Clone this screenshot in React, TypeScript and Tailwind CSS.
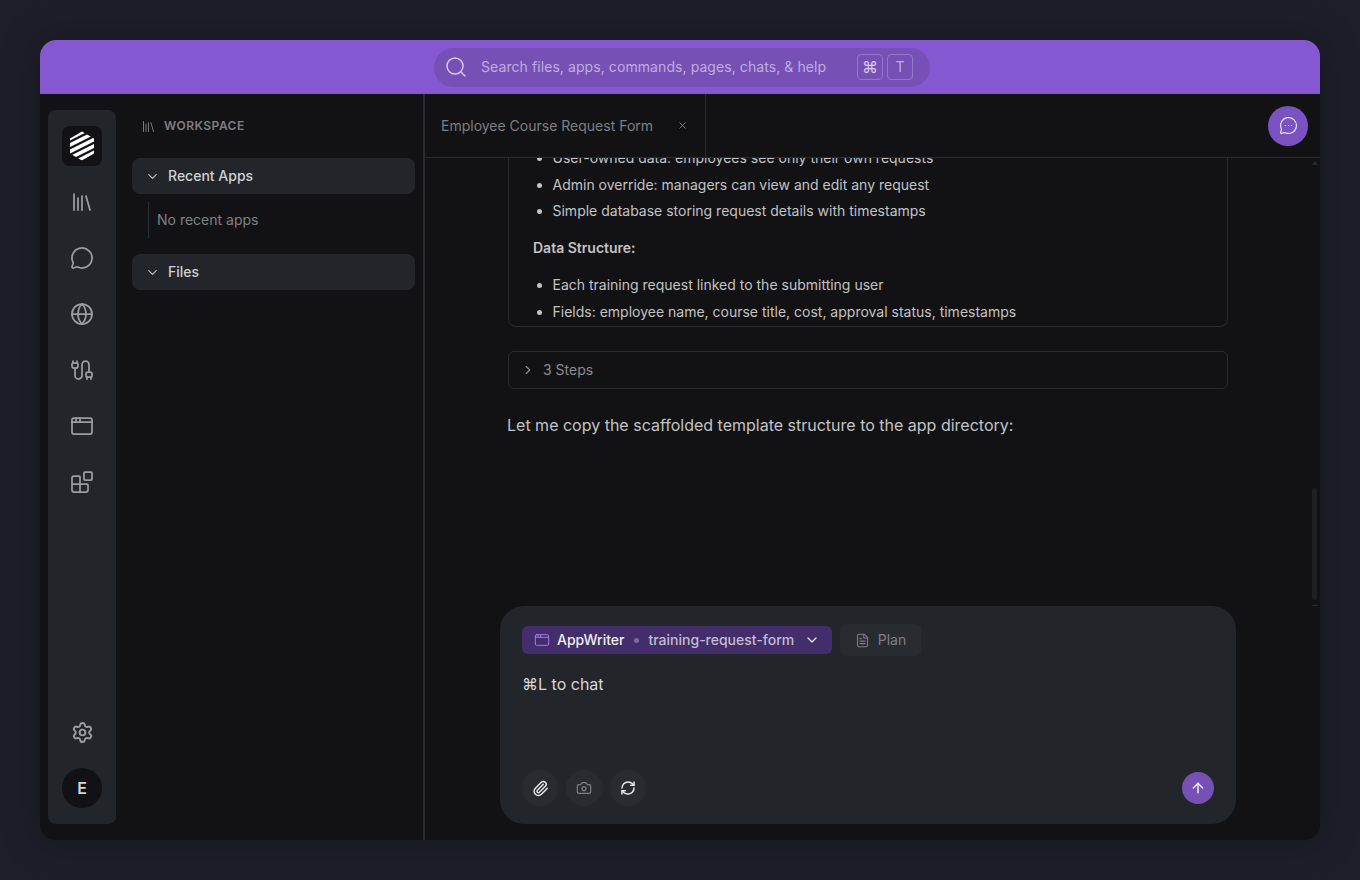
import {
  AppWindow,
  ArrowUp,
  Blocks,
  Cable,
  Camera,
  ChevronDown,
  ChevronRight,
  FileText,
  Globe,
  Library,
  MessageCircle,
  MessageCircleMore,
  Paperclip,
  RefreshCw,
  Search,
  Settings,
  X,
} from 'lucide-react';

const font = { fontFamily: 'Inter, "Noto Sans", sans-serif' };

// hexagon logo with diagonal stripes
function Logo() {
  return (
    <svg width="26" height="30" viewBox="0 0 26 30">
      <defs>
        <clipPath id="hex">
          <polygon points="13,0.5 25,7.5 25,22.5 13,29.5 1,22.5 1,7.5" />
        </clipPath>
      </defs>
      <g clipPath="url(#hex)" stroke="white" strokeWidth="3.4">
        <line x1="-4" y1="10" x2="22" y2="-3" />
        <line x1="-4" y1="16.5" x2="30" y2="-0.5" />
        <line x1="-4" y1="23" x2="30" y2="6" />
        <line x1="-4" y1="29.5" x2="30" y2="12.5" />
        <line x1="-2" y1="35" x2="30" y2="19" />
      </g>
    </svg>
  );
}

function RailIcon({ children }: { children: React.ReactNode }) {
  return <div className="flex h-[56px] items-center justify-center text-[#9b9da0]">{children}</div>;
}

function Rail() {
  return (
    <div className="flex w-[68px] flex-col items-center rounded-lg bg-[#22262b] pt-4 pb-4">
      <div className="flex h-10 w-10 items-center justify-center rounded-lg bg-[#121214]">
        <Logo />
      </div>
      <div className="mt-2 w-full">
        <RailIcon><Library size={24} strokeWidth={1.75} /></RailIcon>
        <RailIcon><MessageCircle size={24} strokeWidth={1.75} /></RailIcon>
        <RailIcon><Globe size={24} strokeWidth={1.75} /></RailIcon>
        <RailIcon><Cable size={24} strokeWidth={1.75} /></RailIcon>
        <RailIcon><AppWindow size={24} strokeWidth={1.75} /></RailIcon>
        <RailIcon><Blocks size={24} strokeWidth={1.75} /></RailIcon>
      </div>
      <div className="mt-auto flex w-full flex-col items-center">
        <RailIcon><Settings size={23} strokeWidth={2} /></RailIcon>
        <div className="mt-[8px] flex h-10 w-10 items-center justify-center rounded-full bg-[#121214] text-base font-semibold text-[#d4d4d6]">
          E
        </div>
      </div>
    </div>
  );
}

function SectionRow({ label }: { label: string }) {
  return (
    <div className="flex h-[36px] items-center rounded-lg bg-[#22262b] pl-[13px] text-sm font-medium text-[#cfd0d2]">
      <ChevronDown size={15} strokeWidth={2} className="text-[#b8b9bb]" />
      <span className="ml-[8px]">{label}</span>
    </div>
  );
}

function Sidebar() {
  return (
    <div className="flex w-[309px] flex-col border-r-2 border-[#2a2b2e] pr-2 pl-4">
      <div className="flex h-[64px] items-center pl-[9px] text-xs font-semibold tracking-[0.04em] text-[#7e7f82]">
        <Library size={15} strokeWidth={1.5} />
        <span className="ml-[8px]">WORKSPACE</span>
      </div>
      <SectionRow label="Recent Apps" />
      <div className="mt-2 ml-4 flex h-[36px] items-center border-l border-[#2e2f32] pl-2 text-sm text-[#808185]">
        No recent apps
      </div>
      <div className="mt-4">
        <SectionRow label="Files" />
      </div>
    </div>
  );
}

function Bullet({ children }: { children: React.ReactNode }) {
  return <li className="ml-[19.5px] h-[26.5px] text-[14px] leading-[26.5px] text-[#c2c3c5]">{children}</li>;
}

function Transcript() {
  return (
    <div className="relative min-h-0 flex-1 overflow-hidden">
      <div className="mt-[-14px] ml-[83px] w-[720px]">
        <div className="rounded-b-lg border border-t-0 border-[#2a2b2e] pt-[1px] pr-6 pb-[1px] pl-6">
          <ul className="list-disc">
            <Bullet>User-owned data: employees see only their own requests</Bullet>
            <Bullet>Admin override: managers can view and edit any request</Bullet>
            <Bullet>Simple database storing request details with timestamps</Bullet>
          </ul>
          <p className="mt-[14px] mb-[16.5px] h-[17px] text-[14px] leading-[17px] font-semibold text-[#c2c3c5]">Data Structure:</p>
          <ul className="list-disc">
            <Bullet>Each training request linked to the submitting user</Bullet>
            <Bullet>Fields: employee name, course title, cost, approval status, timestamps</Bullet>
          </ul>
        </div>
        <div className="mt-[24px] flex h-[38px] items-center rounded-md border border-[#2a2b2e] pl-[12px] text-sm text-[#8b8c8f]">
          <ChevronRight size={14} strokeWidth={2} />
          <span className="ml-[8px]">3 Steps</span>
        </div>
        <p className="mt-[24px] ml-[-1px] text-base leading-6 text-[#c2c3c5]">
          Let me copy the scaffolded template structure to the app directory:
        </p>
      </div>
      {/* scrollbar */}
      <div className="absolute top-[3px] right-[2px] h-0 w-0 border-x-[3px] border-b-[4px] border-x-transparent border-b-[#2a2b2e]" />
      <div className="absolute top-[330px] right-[3px] h-[112px] w-[5px] rounded-full bg-[#1f2022]" />
      <div className="absolute top-[447px] right-[2px] h-0 w-0 border-x-[3px] border-t-[4px] border-x-transparent border-t-[#2a2b2e]" />
    </div>
  );
}

function RoundTool({ children, dim }: { children: React.ReactNode; dim?: boolean }) {
  return (
    <div className={`flex h-9 w-9 items-center justify-center rounded-full bg-[#282b30] ${dim ? 'text-[#7e8084]' : 'text-[#e8e8ea]'}`}>
      {children}
    </div>
  );
}

function Composer() {
  return (
    <div className="mb-4 ml-[75px] flex h-[218px] w-[736px] flex-col rounded-[24px] bg-[#22262b] px-[22px] pt-[18px] pb-[18px]">
      <div className="flex items-center gap-2">
        <div className="flex h-[28px] w-[310px] items-center rounded-md bg-[#432d6a] pl-3 text-sm">
          <AppWindow size={16} strokeWidth={1.5} className="text-[#a578e8]" />
          <span className="ml-[7px] font-medium text-[#eeeef0]">AppWriter</span>
          <span className="mr-[9px] ml-[10px] h-[5px] w-[5px] rounded-full bg-[#7f6a9f]" />
          <span className="font-medium text-[#c4bcd2]">training-request-form</span>
          <ChevronDown size={16} strokeWidth={2} className="ml-[10px] text-[#e0dde6]" />
        </div>
        <div className="flex h-8 w-[81px] items-center justify-center rounded-md bg-[#282b30] text-sm text-[#7e8084]">
          <FileText size={15} strokeWidth={1.75} />
          <span className="ml-[8px]">Plan</span>
        </div>
      </div>
      <p className="mt-[16px] text-base leading-6 text-[#d6d6d8]">⌘L to chat</p>
      <div className="mt-auto flex items-center gap-2">
        <RoundTool><Paperclip size={17} strokeWidth={2} /></RoundTool>
        <RoundTool dim><Camera size={16} strokeWidth={1.75} /></RoundTool>
        <RoundTool><RefreshCw size={16} strokeWidth={2.25} /></RoundTool>
        <div className="ml-auto flex h-8 w-8 items-center justify-center rounded-full bg-[#7650b5] text-[#f0eaf8]">
          <ArrowUp size={16} strokeWidth={2.25} />
        </div>
      </div>
    </div>
  );
}

export default function App() {
  return (
    <div className="h-[880px] bg-[#1d1e29] p-10" style={font}>
      <div className="flex h-[800px] w-[1280px] flex-col overflow-hidden rounded-2xl bg-[#121214] shadow-[0_0_40px_rgba(0,0,0,0.25)]">
        <div className="flex h-[54px] shrink-0 items-center justify-center bg-[#8557d0] pl-[4px]">
          <div className="flex h-[39px] w-[496px] items-center rounded-full bg-[#7650b5] pr-[17px] pl-[10px]">
            <Search size={24} strokeWidth={1.5} className="text-[#d6c9ec]" />
            <span className="ml-[13px] text-sm tracking-[0.08px] text-[#bfaee0]">Search files, apps, commands, pages, chats, &amp; help</span>
            <span className="ml-auto flex h-[26px] w-[26px] items-center justify-center rounded border border-[#9478c7] text-base text-[#d6c9ec]">⌘</span>
            <span className="ml-1 flex h-[26px] w-[26px] items-center justify-center rounded border border-[#9478c7] text-sm text-[#bfaee0]">T</span>
          </div>
        </div>
        <div className="flex min-h-0 flex-1">
          <div className="flex py-4 pl-2">
            <Rail />
          </div>
          <Sidebar />
          <div className="flex min-w-0 flex-1 flex-col">
            <div className="flex h-[64px] shrink-0 items-stretch border-b border-[#2a2b2e]">
              <div className="flex w-[281px] items-center border-r border-[#2a2b2e] pr-[17px] pl-[16px] text-sm text-[#7e7f82]">
                Employee Course Request Form
                <X size={11} strokeWidth={1.5} className="ml-auto text-[#a3a5a8]" />
              </div>
              <div className="mr-3 ml-auto flex items-center">
                <div className="flex h-10 w-10 items-center justify-center rounded-full bg-[#7b52c1] text-[#e6dff2]">
                  <MessageCircleMore size={19} strokeWidth={1.5} />
                </div>
              </div>
            </div>
            <Transcript />
            <Composer />
          </div>
        </div>
      </div>
    </div>
  );
}
